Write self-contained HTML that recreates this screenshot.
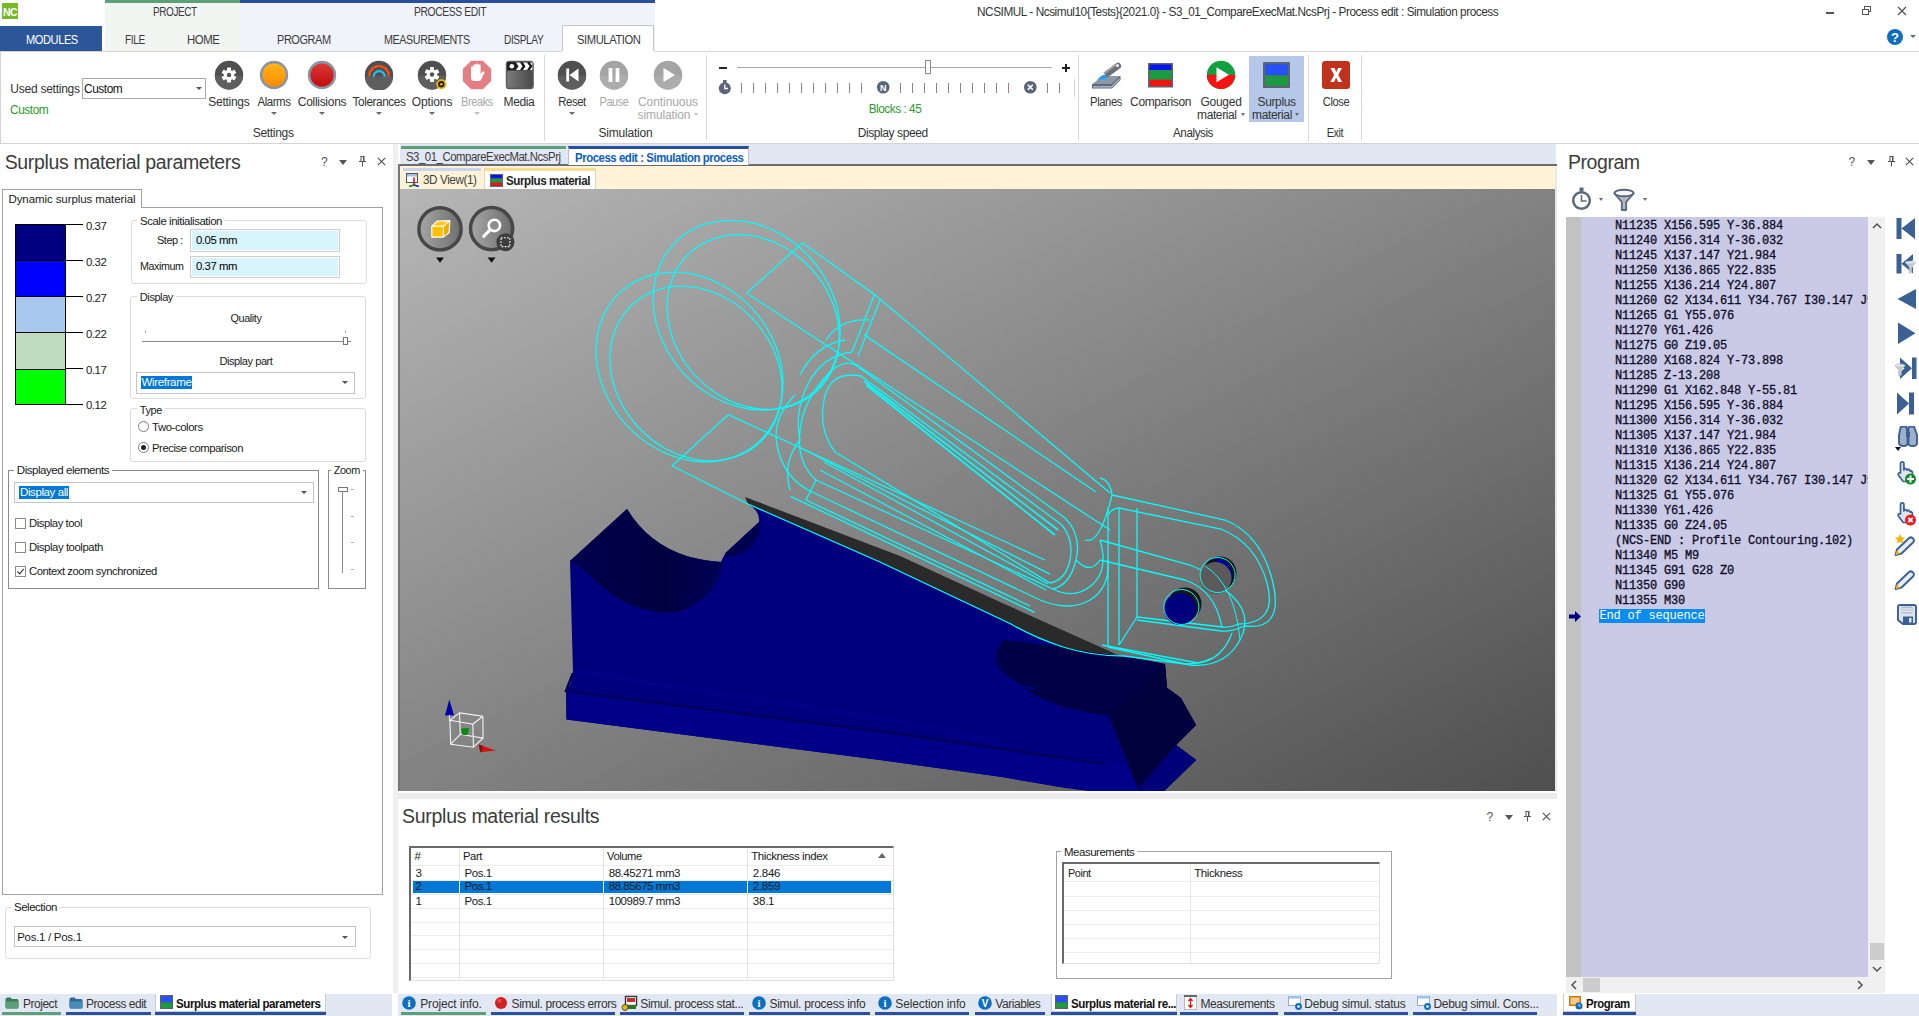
<!DOCTYPE html>
<html lang="en"><head>
<meta charset="utf-8">
<title>NCSIMUL</title>
<style>
*{box-sizing:border-box;margin:0;padding:0}
html,body{width:1919px;height:1016px;overflow:hidden;background:#fff;font-family:"Liberation Sans",sans-serif;color:#262626}
.a{position:absolute}
.t{position:absolute;white-space:nowrap;line-height:1}
/* ---- title / tabs ---- */
#ctxP{left:105px;top:0;width:135px;height:51px;background:#f1f6f3}
#ctxE{left:240px;top:0;width:415px;height:51px;background:#f0f3fa}
.ctxbar{position:absolute;left:0;top:0;right:0;height:3px}
.tab{font-size:12px;color:#3a3a3a;top:33.500px}
.ctxlbl{font-size:12px;color:#3a3a3a;top:6.400px}
#modules{left:0;top:26px;width:102px;height:25px;background:#2b579a;color:#fff;font-size:12px;text-align:center;line-height:25px}
#simtab{left:562px;top:25px;width:92px;height:27px;background:#fff;border:1px solid #c6c6c6;border-bottom:none}
/* ---- ribbon ---- */
#ribbon{left:0;top:51px;width:1919px;height:93px;border-top:1px solid #d4d4d4;border-bottom:1px solid #d4d4d4;border-left:1px solid #d4d4d4;background:#fff}
.rl{font-size:12px;color:#333;top:95.500px;text-align:center;transform:translateX(-50%)}
.rl.dis{color:#a8a8a8}
.gl{font-size:12px;color:#333;top:126.500px;transform:translateX(-50%)}
.sep{position:absolute;top:55px;width:1px;height:86px;background:#dadada}
.dd{position:absolute;width:0;height:0;border-left:3px solid transparent;border-right:3px solid transparent;border-top:3px solid #6a6a6a;transform:translateX(-50%)}
.dd.dis{border-top-color:#c0c0c0}
/* ---- panels ---- */
.ptitle{font-size:19.5px;color:#3c3c3c}
.small{font-size:11.5px;color:#1a1a1a}
.grp{position:absolute;border:1px solid #dcdcdc;border-radius:3px}
.grp>span{position:absolute;top:-8px;left:6px;background:#fff;padding:0 3px;font-size:11px;color:#222;line-height:14px;white-space:nowrap}
.btab{position:absolute;top:993px;height:23px;font-size:12px;color:#333;white-space:nowrap;line-height:20px}
.btab i{position:absolute;left:0;right:2px;bottom:0;height:3px;background:#2b4f9c}
.btab.g i{background:#5e9e78}
</style>
</head>
<body>
<!-- ================= TITLE BAR ================= -->
<div class="a" id="ctxP"><div class="ctxbar" style="background:#5e9e78"></div></div>
<div class="a" id="ctxE"><div class="ctxbar" style="background:#2b4f9c"></div></div>
<svg class="a" style="left:2px;top:3px" width="16" height="16"><rect width="16" height="16" fill="#78b82a"></rect><text x="8" y="12.5" font-family="Liberation Sans,sans-serif" font-size="10.5" font-weight="bold" fill="#fff" text-anchor="middle" letter-spacing="-0.5">NC</text></svg>
<div class="t ctxlbl" style="left: 153px; letter-spacing: -0.45px; transform: scaleX(0.829); transform-origin: 0px 50%;">PROJECT</div>
<div class="t ctxlbl" style="left: 414px; letter-spacing: -0.45px; transform: scaleX(0.861); transform-origin: 0px 50%;">PROCESS EDIT</div>
<!-- window controls -->
<div class="a" style="left:1826px;top:12px;width:8px;height:2px;background:#555"></div>
<svg class="a" style="left:1861px;top:5px" width="11" height="11"><rect x="3.5" y="1.5" width="6" height="5" fill="none" stroke="#555"></rect><rect x="1.5" y="4.5" width="6" height="5" fill="#fff" stroke="#555"></rect></svg>
<svg class="a" style="left:1897px;top:6px" width="10" height="10"><path d="M1 1L9 9M9 1L1 9" stroke="#555" stroke-width="1.3"></path></svg>
<svg class="a" style="left:1886px;top:28px" width="18" height="18"><circle cx="9" cy="9" r="8" fill="#0e6fc0"></circle><text x="9" y="13.5" font-family="Liberation Sans,sans-serif" font-size="13" font-weight="bold" fill="#fff" text-anchor="middle">?</text></svg>
<div class="dd" style="left:1913px;top:35px"></div>
<!-- ================= TAB ROW ================= -->
<div class="a" id="modules"></div><div class="t tab" style="left: 26px; color: rgb(255, 255, 255); letter-spacing: -0.45px; transform: scaleX(0.922); transform-origin: 0px 50%;">MODULES</div>
<div class="a" id="simtab"></div>
<div class="t tab" style="left: 125px; letter-spacing: -0.45px; transform: scaleX(0.837); transform-origin: 0px 50%;">FILE</div>
<div class="t tab" style="left: 186.5px; letter-spacing: -0.45px; transform: scaleX(0.95); transform-origin: 0px 50%;">HOME</div>
<div class="t tab" style="left: 277.4px; letter-spacing: -0.45px; transform: scaleX(0.911); transform-origin: 0px 50%;">PROGRAM</div>
<div class="t tab" style="left: 384.3px; letter-spacing: -0.45px; transform: scaleX(0.894); transform-origin: 0px 50%;">MEASUREMENTS</div>
<div class="t tab" style="left: 504.4px; letter-spacing: -0.45px; transform: scaleX(0.844); transform-origin: 0px 50%;">DISPLAY</div>
<div class="t tab" style="left: 576.6px; letter-spacing: -0.45px; transform: scaleX(0.934); transform-origin: 0px 50%;">SIMULATION</div>
<!-- ================= RIBBON ================= -->
<div class="a" id="ribbon"></div>
<div class="a" style="left:562px;top:51px;width:92px;height:1px;background:#fff"></div>
<div class="a" style="left:563px;top:51px;width:90px;height:1px;background:#fff"></div>
<div class="t" style="left: 977.4px; top: 6px; font-size: 12px; color: rgb(51, 51, 51); letter-spacing: -0.45px; transform: scaleX(0.982); transform-origin: 0px 50%;">NCSIMUL - Ncsimul10{Tests}{2021.0} - S3_01_CompareExecMat.NcsPrj - Process edit : Simulation process</div>
<div class="t" style="left: 10.3px; top: 83px; font-size: 12px; color: rgb(51, 51, 51); letter-spacing: -0.25px;">Used settings</div>
<div class="a" style="left:82px;top:78px;width:124px;height:21px;border:1px solid #ababab;background:#fff"></div>
<div class="t" style="left: 84.2px; top: 83px; font-size: 12px; color: rgb(17, 17, 17); letter-spacing: -0.45px; transform: scaleX(0.991); transform-origin: 0px 50%;">Custom</div>
<div class="dd" style="left:198.5px;top:87px;border-top-color:#555"></div>
<div class="t" style="left: 10.3px; top: 104px; font-size: 12px; color: rgb(44, 154, 44); letter-spacing: -0.45px; transform: scaleX(0.991); transform-origin: 0px 50%;">Custom</div>
<!-- Settings icons -->
<svg class="a" style="left:214px;top:60px" width="30" height="30" viewBox="0 0 30 30"><circle cx="15" cy="15" r="14.2" fill="#4f4f4f"></circle><path d="M0.8 15.5a14.2 14.2 0 0 0 28.4 0z" fill="#5e5e5e"></path><g fill="#fff"><circle cx="15" cy="15" r="5.2"></circle><g id="gt"><rect x="13" y="7.6" width="4" height="14.8" rx=".6"></rect></g><use href="#gt" transform="rotate(60 15 15)"></use><use href="#gt" transform="rotate(120 15 15)"></use></g><circle cx="15" cy="15" r="2.2" fill="#555"></circle></svg>
<svg class="a" style="left:259px;top:60px" width="30" height="30" viewBox="0 0 30 30"><defs><linearGradient id="og" x1="0" y1="0" x2="0" y2="1"><stop offset="0" stop-color="#ffb515"></stop><stop offset="1" stop-color="#ff8a00"></stop></linearGradient></defs><circle cx="15" cy="15" r="14.2" fill="#8a94a4"></circle><circle cx="15" cy="15" r="11.6" fill="url(#og)"></circle></svg>
<svg class="a" style="left:307px;top:60px" width="30" height="30" viewBox="0 0 30 30"><defs><linearGradient id="rg" x1="0" y1="0" x2="0" y2="1"><stop offset="0" stop-color="#dc3838"></stop><stop offset="1" stop-color="#c00c0c"></stop></linearGradient></defs><circle cx="15" cy="15" r="14.2" fill="#8a94a4"></circle><circle cx="15" cy="15" r="11.6" fill="url(#rg)"></circle></svg>
<svg class="a" style="left:364px;top:60px" width="30" height="30" viewBox="0 0 30 30"><circle cx="15" cy="15" r="14.2" fill="#4f4f4f"></circle><path d="M0.8 16.5a14.2 14.2 0 0 0 28.4 0z" fill="#5e5e5e"></path><path d="M5.5 16.5v-4l3.5-4.5l4-1.8h4l4 1.8l3.500 4.5v4" fill="none" stroke="#ff4a12" stroke-width="2.3"></path><path d="M9.6 16.8a5.6 5.6 0 0 1 11.2 0" fill="none" stroke="#1cc8f0" stroke-width="2.2"></path></svg>
<svg class="a" style="left:417px;top:60px" width="32" height="32" viewBox="0 0 32 32"><circle cx="15" cy="15" r="14.2" fill="#4f4f4f"></circle><path d="M0.8 15.5a14.2 14.2 0 0 0 28.4 0z" fill="#5e5e5e"></path><g fill="#fff"><circle cx="15" cy="14.5" r="5.2"></circle><g id="gt2"><rect x="13" y="7.1" width="4" height="14.8" rx=".6"></rect></g><use href="#gt2" transform="rotate(60 15 14.5)"></use><use href="#gt2" transform="rotate(120 15 14.5)"></use></g><circle cx="15" cy="14.5" r="2.2" fill="#555"></circle><circle cx="24.3" cy="24.2" r="5" fill="#f2b500"></circle><circle cx="24.3" cy="24.2" r="3.2" fill="#222"></circle><circle cx="24.3" cy="24.2" r="1.3" fill="#f2b500"></circle></svg>
<svg class="a" style="left:462px;top:60px" width="30" height="30" viewBox="0 0 30 30"><path d="M9.100 .8h11.800l8.300 8.300v11.800l-8.300 8.300h-11.800l-8.300-8.300v-11.800z" fill="#e37f83"></path><path d="M9 14v-6.500a1.200 1.200 0 0 1 2.400 0v-2a1.200 1.200 0 0 1 2.400 0v-.8a1.200 1.200 0 0 1 2.400 0v.8a1.200 1.200 0 0 1 2.400 0v8.500l1.800-2.200a1.200 1.200 0 0 1 2 1.200l-3.300 6.500q-.8 1.500-2.500 1.500h-4.500q-3.100 0-3.100-3.500z" fill="#fff"></path></svg>
<svg class="a" style="left:505px;top:60px" width="30" height="30" viewBox="0 0 30 30"><defs><linearGradient id="mg" x1="0" y1="0" x2="1" y2="0"><stop offset="0" stop-color="#7a7a7a"></stop><stop offset="1" stop-color="#4a4a4a"></stop></linearGradient></defs><rect x=".8" y=".8" width="28" height="28.400" rx="3.500" fill="#5a5a5a"></rect><rect x="2.200" y="11" width="25.200" height="16.600" rx="1.500" fill="url(#mg)"></rect><rect x="2.200" y="2.200" width="25.200" height="8" fill="#1e1e1e"></rect><circle cx="6.800" cy="6.200" r="2.300" fill="#fff"></circle><path d="M11 2.500h4l2.500 3.700l-2.500 3.700h-4l2.500-3.700zM18 2.500h4l2.500 3.700l-2.500 3.700h-4l2.500-3.700zM25 2.500h2.400v7.400h-2.400l2.400-3.700z" fill="#fff"></path></svg>
<div class="t rl c" style="left: 228.9px; letter-spacing: -0.29px;">Settings</div>
<div class="t rl c" style="left: 273.8px; letter-spacing: -0.45px; transform: translateX(-50%) scaleX(0.953);">Alarms</div>
<div class="t rl c" style="left: 322px; letter-spacing: -0.29px;">Collisions</div>
<div class="t rl c" style="left: 378.9px; letter-spacing: -0.45px; transform: translateX(-50%) scaleX(0.986);">Tolerances</div>
<div class="t rl c" style="left: 432px; letter-spacing: -0.09px;">Options</div>
<div class="t rl c dis" style="left: 476.8px; letter-spacing: -0.45px; transform: translateX(-50%) scaleX(0.918);">Breaks</div>
<div class="t rl c" style="left: 519px; letter-spacing: -0.36px;">Media</div>
<div class="dd" style="left:273.8px;top:112px"></div><div class="dd" style="left:322px;top:112px"></div><div class="dd" style="left:378.9px;top:112px"></div><div class="dd" style="left:432px;top:112px"></div><div class="dd dis" style="left:476.8px;top:112px"></div>
<div class="t gl c" style="left: 273.2px; letter-spacing: -0.29px;">Settings</div>
<div class="sep" style="left:544px"></div>
<!-- Simulation group -->
<svg class="a" style="left:557px;top:60px" width="30" height="30" viewBox="0 0 30 30"><circle cx="15" cy="15" r="14.2" fill="#4f4f4f"></circle><path d="M0.8 15.500a14.200 14.200 0 0 0 28.400 0z" fill="#5e5e5e"></path><path d="M9.300 8.500h2.800v13h-2.800zM21.500 8.500v13l-9-6.500z" fill="#fff"></path></svg>
<svg class="a" style="left:599px;top:60px" width="30" height="30" viewBox="0 0 30 30"><circle cx="15" cy="15" r="14.2" fill="#a4a4a4"></circle><path d="M0.8 15.500a14.200 14.200 0 0 0 28.400 0z" fill="#acacac"></path><path d="M9.600 8h3.800v14h-3.800zM16.600 8h3.800v14h-3.800z" fill="#fff"></path></svg>
<svg class="a" style="left:653px;top:60px" width="30" height="30" viewBox="0 0 30 30"><circle cx="15" cy="15" r="14.2" fill="#a4a4a4"></circle><path d="M0.8 15.500a14.200 14.200 0 0 0 28.400 0z" fill="#acacac"></path><path d="M10.500 8l11.500 7l-11.500 7z" fill="#fff"></path></svg>
<div class="t rl c" style="left: 572px; letter-spacing: -0.45px; transform: translateX(-50%) scaleX(0.945);">Reset</div>
<div class="t rl c dis" style="left: 614px; letter-spacing: -0.45px; transform: translateX(-50%) scaleX(0.909);">Pause</div>
<div class="t rl c dis" style="left: 668px; letter-spacing: -0.07px;">Continuous</div>
<div class="t rl c dis" style="left: 664px; top: 108.5px; letter-spacing: -0.12px;">simulation</div>
<div class="dd" style="left:572px;top:112px"></div><div class="dd dis" style="left:695.5px;top:113px;border-width:3px 2.5px 0"></div>
<div class="t gl c" style="left: 625.5px; letter-spacing: -0.2px;">Simulation</div>
<div class="sep" style="left:706px"></div>
<!-- Display speed -->
<div class="a" style="left:719px;top:67px;width:8px;height:2px;background:#222"></div>
<div class="a" style="left:737px;top:67px;width:315px;height:1px;background:#a8a8a8"></div>
<div class="a" style="left:925px;top:60px;width:6px;height:14px;border:1px solid #8a8a8a;background:#fff"></div>
<div class="a" style="left:1062px;top:67px;width:8px;height:2px;background:#222"></div><div class="a" style="left:1065px;top:64px;width:2px;height:8px;background:#222"></div>
<svg class="a" style="left:716px;top:78px" width="365" height="20" viewBox="716 78 365 20"><g stroke="#a27c84" stroke-width="1"><path d="M741.5 83v10M753.500 83v10M765.500 83v10M777.500 83v10M789.500 83v10M801.500 83v10M813.500 83v10M825.500 83v10M837.500 83v10M849.500 83v10M861.500 83v10M900.500 83v10M912.500 83v10M924.500 83v10M936.500 83v10M948.500 83v10M960.500 83v10M972.500 83v10M984.500 83v10M996.500 83v10M1008.500 83v10M1047.500 83v10M1059.500 83v10"></path></g><path d="M1074.500 79v18" stroke="#d4d4d4"></path><g><circle cx="724.8" cy="88.300" r="6" fill="#5a6678"></circle><rect x="723" y="80" width="3.600" height="3" fill="#5a6678"></rect><path d="M724.800 84.500v4h3.200" stroke="#fff" stroke-width="1.300" fill="none"></path></g><circle cx="883.2" cy="87.300" r="6.300" fill="#5a6678"></circle><text x="883.2" y="90.800" font-family="Liberation Sans,sans-serif" font-size="9" font-weight="bold" fill="#fff" text-anchor="middle">N</text><circle cx="1030.3" cy="87.300" r="6.300" fill="#5a6678"></circle><path d="M1027.800 84.800l5 5m0-5l-5 5" stroke="#fff" stroke-width="1.600"></path></svg>
<div class="t c" style="left: 894.5px; top: 103px; font-size: 12px; color: rgb(44, 154, 44); transform: translateX(-50%) scaleX(0.979); letter-spacing: -0.45px;">Blocks : 45</div>
<div class="t gl c" style="left: 892.7px; letter-spacing: -0.41px;">Display speed</div>
<div class="sep" style="left:1078px"></div>
<!-- Analysis -->
<div class="a" style="left:1249px;top:56px;width:55px;height:66px;background:#b5c8ea"></div>
<svg class="a" style="left:1090px;top:59px" width="32" height="32" viewBox="0 0 32 32"><path d="M2 25.500l11-8.500h17.500v4l-8.500 8.500h-20z" fill="#5f6b7c"></path><path d="M2.500 25l11-8h16.500l-8.500 8z" fill="#8c98aa"></path><path d="M3 27.800h18.500l8-8" fill="none" stroke="#b9c2cf" stroke-width="1.200"></path><path d="M7 20.500l5.500-4.500h6l-3.500 4.500z" fill="#2a9df0"></path><path d="M13.500 14l12.500-9.500a3 3 0 0 1 4 4.800l-12.500 9.200z" fill="#6a6f78"></path><path d="M14 14.500l12-9" stroke="#9a9fa8" stroke-width="2"></path><circle cx="27.500" cy="6.500" r="1.500" fill="#fff"></circle></svg>
<svg class="a" style="left:1148px;top:63px" width="25" height="25" viewBox="0 0 25 25"><rect width="25" height="24.500" fill="#5b6573"></rect><rect x="1.500" y="1.500" width="22" height="5.500" fill="#0a14f0"></rect><rect x="1.500" y="7" width="22" height="9.800" fill="#1d9a3e"></rect><rect x="1.500" y="16.800" width="22" height="6.200" fill="#f01414"></rect></svg>
<svg class="a" style="left:1206px;top:60px" width="30" height="30" viewBox="0 0 30 30"><circle cx="15" cy="15" r="14.200" fill="#10a040"></circle><path d="M.8 14.800h28.400a14.200 14.200 0 0 1-28.400 0z" fill="#f41414"></path><path d="M10.500 7.300l12.300 7.500l-12.300 7.500z" fill="#fff"></path></svg>
<svg class="a" style="left:1262.500px;top:61.500px" width="27" height="26" viewBox="0 0 27 26"><rect width="27" height="26" rx="1" fill="#5a6472"></rect><rect x="2.300" y="2.300" width="22.400" height="11.200" fill="#2450f4"></rect><rect x="2.300" y="13.500" width="22.400" height="10.200" fill="#1d9a3e"></rect></svg>
<svg class="a" style="left:1322px;top:61px" width="28" height="28" viewBox="0 0 28 28"><rect width="28" height="28" rx="3" fill="#c0321c"></rect><path d="M8.500 7h4l1.800 4.300l1.800-4.300h3.800l-3.600 7l3.800 7h-4l-2-4.500l-2 4.500h-3.800l3.800-7z" fill="#fff"></path></svg>
<div class="t rl c" style="left: 1105.8px; letter-spacing: -0.45px; transform: translateX(-50%) scaleX(0.935);">Planes</div>
<div class="t rl c" style="left: 1160.6px; letter-spacing: -0.37px;">Comparison</div>
<div class="t rl c" style="left: 1221px; letter-spacing: -0.25px;">Gouged</div>
<div class="t rl c" style="left: 1216.8px; top: 108.5px; letter-spacing: -0.41px;">material</div>
<div class="t rl c" style="left: 1276.6px; letter-spacing: -0.38px;">Surplus</div>
<div class="t rl c" style="left: 1272px; top: 108.5px; letter-spacing: -0.34px;">material</div>
<div class="t rl c" style="left: 1336px; letter-spacing: -0.45px; transform: translateX(-50%) scaleX(0.925);">Close</div>
<div class="dd" style="left:1242.7px;top:113px;border-width:3px 2.500px 0"></div><div class="dd" style="left:1297.4px;top:113px;border-width:3px 2.500px 0"></div>
<div class="t gl c" style="left: 1193.4px; letter-spacing: -0.45px; transform: translateX(-50%) scaleX(0.974);">Analysis</div>
<div class="t gl c" style="left: 1335px; letter-spacing: -0.45px; transform: translateX(-50%) scaleX(0.9);">Exit</div>
<div class="sep" style="left:1308px"></div>
<div class="sep" style="left:1361px"></div>
<!--RIBBON-END-->
<!-- ================= LEFT PANEL ================= -->
<!--LEFT-PANEL-->
<div class="t ptitle" style="left: 4.7px; top: 152.5px; letter-spacing: -0.34px;">Surplus material parameters</div>
<div class="t" style="left:321px;top:156px;font-size:12px;color:#555">?</div>
<div class="dd" style="left:343.3px;top:160px;border-width:5px 4.5px 0;border-top-color:#555"></div>
<svg class="a" style="left:358px;top:156px" width="9" height="11"><path d="M2.500 .5h4M3 .5v5M6 .5v5M1 5.500h7M4.500 5.500v5" stroke="#555" fill="none"></path><path d="M5.500 1v4" stroke="#555"></path></svg>
<svg class="a" style="left:377px;top:157px" width="9" height="9"><path d="M.8 .8l7.400 7.400m0-7.400l-7.400 7.400" stroke="#555" stroke-width="1.200"></path></svg>
<!-- tab page -->
<div class="a" style="left:2px;top:207px;width:381px;height:688px;border:1px solid #a0a0a0;background:#fff"></div>
<div class="a" style="left:2px;top:189px;width:140px;height:19px;border:1px solid #a0a0a0;border-bottom:none;background:#fff"></div>
<div class="t small" style="left: 8.5px; top: 194px; letter-spacing: -0.09px;">Dynamic surplus material</div>
<!-- colour scale -->
<div class="a" style="left:15px;top:224px;width:51px;height:181px;border:1px solid #000;background:linear-gradient(#000080 0 35px,#000 35px 36px,#0000ff 36px 71px,#000 71px 72px,#a8c8f0 72px 107px,#000 107px 108px,#c0dcc0 108px 144px,#000 144px 145px,#00ff00 145px)"></div>
<div class="a" style="left:66px;top:224px;width:17px;height:1px;background:#000"></div>
<div class="a" style="left:66px;top:260px;width:17px;height:1px;background:#000"></div>
<div class="a" style="left:66px;top:296px;width:17px;height:1px;background:#000"></div>
<div class="a" style="left:66px;top:332px;width:17px;height:1px;background:#000"></div>
<div class="a" style="left:66px;top:368px;width:17px;height:1px;background:#000"></div>
<div class="a" style="left:66px;top:404px;width:17px;height:1px;background:#000"></div>
<div class="t small" style="left: 85.5px; top: 220.5px; letter-spacing: -0.45px; transform: scaleX(0.986); transform-origin: 0px 50%;">0.37</div>
<div class="t small" style="left: 85.5px; top: 256.5px; letter-spacing: -0.45px; transform: scaleX(0.986); transform-origin: 0px 50%;">0.32</div>
<div class="t small" style="left: 85.5px; top: 292.5px; letter-spacing: -0.45px; transform: scaleX(0.986); transform-origin: 0px 50%;">0.27</div>
<div class="t small" style="left: 85.5px; top: 329px; letter-spacing: -0.45px; transform: scaleX(0.986); transform-origin: 0px 50%;">0.22</div>
<div class="t small" style="left: 85.5px; top: 364.5px; letter-spacing: -0.45px; transform: scaleX(0.986); transform-origin: 0px 50%;">0.17</div>
<div class="t small" style="left: 85.5px; top: 400px; letter-spacing: -0.45px; transform: scaleX(0.986); transform-origin: 0px 50%;">0.12</div>
<!-- Scale initialisation -->
<div class="grp" style="left:131px;top:220px;width:236px;height:64px"></div>
<div class="t small" style="left: 137px; top: 215px; background: rgb(255, 255, 255); padding: 1px 3px; letter-spacing: -0.45px; transform: scaleX(0.995); transform-origin: 0px 50%;">Scale initialisation</div>
<div class="t small" style="left: 156.9px; top: 235px; letter-spacing: -0.45px; transform: scaleX(0.95); transform-origin: 0px 50%;">Step :</div>
<div class="a" style="left:190px;top:229px;width:150px;height:22.500px;border:1px solid #cdcdcd;background:#d8f4fc;box-shadow:inset 0 0 0 1px #fff"></div>
<div class="t small" style="left: 195.5px; top: 234.5px; color: rgb(0, 0, 0); letter-spacing: -0.45px; transform: scaleX(0.986); transform-origin: 0px 50%;">0.05 mm</div>
<div class="t small" style="left: 140.4px; top: 261px; letter-spacing: -0.45px; transform: scaleX(0.932); transform-origin: 0px 50%;">Maximum</div>
<div class="a" style="left:190px;top:255.500px;width:150px;height:22.500px;border:1px solid #cdcdcd;background:#d8f4fc;box-shadow:inset 0 0 0 1px #fff"></div>
<div class="t small" style="left: 195.5px; top: 260.5px; color: rgb(0, 0, 0); letter-spacing: -0.45px; transform: scaleX(0.986); transform-origin: 0px 50%;">0.37 mm</div>
<!-- Display -->
<div class="grp" style="left:130px;top:296px;width:236px;height:103px"></div>
<div class="t small" style="left: 137px; top: 291px; background: rgb(255, 255, 255); padding: 1px 3px; letter-spacing: -0.45px; transform: scaleX(0.955); transform-origin: 0px 50%;">Display</div>
<div class="t small c" style="left: 246px; top: 312.5px; transform: translateX(-50%) scaleX(0.943); letter-spacing: -0.45px;">Quality</div>
<div class="a" style="left:142px;top:341px;width:209px;height:1px;background:#8c8c8c"></div>
<div class="a" style="left:145px;top:330px;width:1px;height:3px;background:#b0b0b0"></div>
<div class="a" style="left:345px;top:330px;width:1px;height:3px;background:#b0b0b0"></div>
<div class="a" style="left:343px;top:337px;width:5px;height:8px;border:1px solid #777;background:#fff"></div>
<div class="t small c" style="left: 246px; top: 356px; transform: translateX(-50%) scaleX(0.958); letter-spacing: -0.45px;">Display part</div>
<div class="a" style="left:136px;top:372px;width:219px;height:22px;border:1px solid #c4c4c4;background:#fff"></div>
<div class="t small" style="left: 140.5px; top: 376px; color: rgb(255, 255, 255); background: rgb(0, 120, 215); padding: 1px; height: 13px; letter-spacing: -0.34px;">Wireframe</div>
<div class="dd" style="left:344.500px;top:381px;border-top-color:#555"></div>
<!-- Type -->
<div class="grp" style="left:130px;top:408px;width:236px;height:54px"></div>
<div class="t small" style="left: 137px; top: 403.5px; background: rgb(255, 255, 255); padding: 1px 3px; letter-spacing: -0.45px; transform: scaleX(0.951); transform-origin: 0px 50%;">Type</div>
<div class="a" style="left:138px;top:421px;width:11px;height:11px;border:1px solid #7a7a7a;border-radius:50%;background:#fff"></div>
<div class="t small" style="left: 152.2px; top: 421.5px; letter-spacing: -0.45px; transform: scaleX(0.992); transform-origin: 0px 50%;">Two-colors</div>
<div class="a" style="left:138px;top:442px;width:11px;height:11px;border:1px solid #7a7a7a;border-radius:50%;background:#fff"></div>
<div class="a" style="left:141px;top:445px;width:5px;height:5px;border-radius:50%;background:#222"></div>
<div class="t small" style="left: 152.2px; top: 442.5px; letter-spacing: -0.45px; transform: scaleX(0.98); transform-origin: 0px 50%;">Precise comparison</div>
<!-- Displayed elements -->
<div class="a" style="left:8px;top:470px;width:311px;height:119px;border:1px solid #8c8c8c"></div>
<div class="t small" style="left: 13.8px; top: 463.5px; background: rgb(255, 255, 255); padding: 1px 3px; letter-spacing: -0.45px;">Displayed elements</div>
<div class="a" style="left:14px;top:482px;width:300px;height:21px;border:1px solid #c4c4c4;background:#fff"></div>
<div class="t small" style="left: 19px; top: 486px; color: rgb(255, 255, 255); background: rgb(0, 120, 215); padding: 1px; height: 13px; letter-spacing: -0.4px;">Display all</div>
<div class="dd" style="left:304.400px;top:491px;border-top-color:#555"></div>
<div class="a" style="left:15px;top:518px;width:11px;height:11px;border:1px solid #8a8a8a;background:#fff"></div>
<div class="t small" style="left: 29.4px; top: 518px; letter-spacing: -0.45px; transform: scaleX(0.981); transform-origin: 0px 50%;">Display tool</div>
<div class="a" style="left:15px;top:542px;width:11px;height:11px;border:1px solid #8a8a8a;background:#fff"></div>
<div class="t small" style="left: 29.4px; top: 542px; letter-spacing: -0.45px; transform: scaleX(0.989); transform-origin: 0px 50%;">Display toolpath</div>
<div class="a" style="left:15px;top:566px;width:11px;height:11px;border:1px solid #8a8a8a;background:#fff"></div>
<svg class="a" style="left:16px;top:567px" width="9" height="9"><path d="M1.500 4.500l2.200 2.300l4-5" stroke="#333" stroke-width="1.100" fill="none"></path></svg>
<div class="t small" style="left: 29.4px; top: 566px; letter-spacing: -0.45px; transform: scaleX(0.978); transform-origin: 0px 50%;">Context zoom synchronized</div>
<!-- Zoom -->
<div class="a" style="left:328px;top:470px;width:38px;height:119px;border:1px solid #8c8c8c"></div>
<div class="t small" style="left: 331px; top: 463.5px; background: rgb(255, 255, 255); padding: 1px 3px; letter-spacing: -0.45px; transform: scaleX(0.942); transform-origin: 0px 50%;">Zoom</div>
<div class="a" style="left:342px;top:491px;width:1px;height:82px;background:#8c8c8c"></div>
<div class="a" style="left:338px;top:487px;width:10px;height:5px;border:1px solid #777;background:#fff"></div>
<div class="a" style="left:351px;top:489px;width:3px;height:1px;background:#b0b0b0"></div>
<div class="a" style="left:351px;top:516px;width:3px;height:1px;background:#b0b0b0"></div>
<div class="a" style="left:351px;top:542px;width:3px;height:1px;background:#b0b0b0"></div>
<div class="a" style="left:351px;top:569px;width:3px;height:1px;background:#b0b0b0"></div>
<!-- Selection -->
<div class="grp" style="left:5px;top:907px;width:366px;height:52px"></div>
<div class="t small" style="left: 11.3px; top: 901px; background: rgb(255, 255, 255); padding: 1px 3px; letter-spacing: -0.45px; transform: scaleX(0.994); transform-origin: 0px 50%;">Selection</div>
<div class="a" style="left:14px;top:926px;width:342px;height:21px;border:1px solid #c4c4c4;background:#fff"></div>
<div class="t small" style="left: 17.2px; top: 931.5px; letter-spacing: -0.29px;">Pos.1 / Pos.1</div>
<div class="dd" style="left:345.100px;top:936px;border-top-color:#555"></div>
<!-- splitter + doc frame -->
<div class="a" style="left:393px;top:144px;width:5px;height:849px;background:#f0f0f0"></div>
<!--LEFT-END-->
<!-- ================= CENTER ================= -->
<!--CENTER-->
<div class="a" style="left:400px;top:144px;width:1156px;height:20px;background:#e2e7f4"></div>
<div class="a" style="left:398px;top:164px;width:1159px;height:2px;background:#6c6c6c"></div>
<div class="a" style="left:398px;top:164px;width:2px;height:627px;background:#767676"></div>
<div class="a" style="left:1555px;top:166px;width:2px;height:625px;background:#e8e8e8"></div>
<div class="a" style="left:400px;top:166px;width:1155px;height:23px;background:#fef3d8"></div>
<div class="a" style="left:401px;top:146px;width:165px;height:3px;background:#5e9e78"></div>
<div class="t" style="left: 405.6px; top: 151px; font-size: 12px; color: rgb(58, 58, 58); letter-spacing: -0.45px; transform: scaleX(0.943); transform-origin: 0px 50%;">S3_01_CompareExecMat.NcsPrj</div>
<div class="a" style="left:568px;top:146px;width:181px;height:19px;background:#fff;border:1px solid #b8c0d8;border-bottom:none;border-top:3px solid #2b4f9c"></div>
<div class="t" style="left: 574.7px; top: 152px; font-size: 12px; color: rgb(10, 94, 194); font-weight: bold; letter-spacing: -0.45px; transform: scaleX(0.947); transform-origin: 0px 50%;">Process edit : Simulation process</div>
<div class="a" style="left:403px;top:168px;width:78px;height:3px;background:#c9d5f0"></div>
<svg class="a" style="left:405px;top:172px" width="16" height="15" viewBox="0 0 16 15"><rect x="1.5" y="1.5" width="11" height="9" fill="#fff" stroke="#555"></rect><rect x="2" y="2" width="10" height="2.5" fill="#9ec0ee"></rect><path d="M9 13.500v-8" stroke="#e01010" stroke-width="1.600"></path><path d="M9 13l-5 1.500" stroke="#0a8a20" stroke-width="1.800"></path><path d="M9 13l5 1.500" stroke="#1030d0" stroke-width="1.800"></path></svg>
<div class="t" style="left: 423px; top: 174px; font-size: 12px; color: rgb(68, 68, 68); letter-spacing: -0.45px; transform: scaleX(0.979); transform-origin: 0px 50%;">3D View(1)</div>
<div class="a" style="left:484px;top:168px;width:112px;height:21px;background:#fff;border:1px solid #e2d6b0;border-bottom:none;border-top:3px solid #f8dc94"></div>
<svg class="a" style="left:490px;top:174px" width="13" height="13"><rect width="13" height="13" fill="#5b6573"></rect><rect x="1" y="1" width="11" height="3.500" fill="#0a14f0"></rect><rect x="1" y="4.500" width="11" height="4" fill="#1d9a3e"></rect><rect x="1" y="8.500" width="11" height="3.500" fill="#e01818"></rect></svg>
<div class="t" style="left: 505.6px; top: 175px; font-size: 12px; color: rgb(34, 34, 34); font-weight: bold; letter-spacing: -0.45px; transform: scaleX(0.967); transform-origin: 0px 50%;">Surplus material</div>
<svg class="a" style="left:400px;top:189px" width="1155" height="602" viewBox="400 189 1155 602">
<defs><linearGradient id="bgG" x1="0" y1="0" x2="1" y2="1"><stop offset="0" stop-color="#b6b6b6"></stop><stop offset="1" stop-color="#4f4f4f"></stop></linearGradient>
<linearGradient id="sdl" x1="0" y1="0" x2="1" y2="0"><stop offset="0" stop-color="#00004e"></stop><stop offset=".6" stop-color="#000040"></stop><stop offset="1" stop-color="#000058"></stop></linearGradient>
<linearGradient id="btn" x1="0" y1="0" x2="1" y2="0"><stop offset="0" stop-color="#a6a6a6"></stop><stop offset="1" stop-color="#6e6e6e"></stop></linearGradient></defs>
<rect x="400" y="189" width="1155" height="602" fill="url(#bgG)"></rect>
<path d="M570 561L627 509Q648 544 688 556.500Q706 561 721 562L725.500 553L759 522Q760 511 748 504L880 562L1011 624Q1035 638 1063 647T1124 656L1165 664L1167 688Q1178 694 1183 703T1196 725L1176 745L1196 760L1164 791L1090 791L1063 787.500L1002 777L880 760L566.500 719.500L566 691Q572 684 573 673Z" fill="#00007e"></path>
<polygon points="566.0,691.0 900.0,734.0 1128.0,765.0 1139.0,791.0 1090.0,791.0 1063.0,787.5 1002.0,777.0 880.0,760.0 566.5,719.5" fill="#000088"></polygon>
<path d="M573 673L566 691L900 734L1105 764" fill="none" stroke="#000058" stroke-width="2.5"></path>
<path d="M575 671L900 722L1000 742" fill="none" stroke="#000090" stroke-width="5" opacity=".5"></path>
<path d="M570 561L627 509Q648 544 688 556.500Q706 561 721 562L724 556Q721 584 701 600T657 612Q622 607 596 581Q582 568 570 561Z" fill="url(#sdl)"></path>
<path d="M725.500 553L759 522Q763 538 746 551Q736 557 725.500 557z" fill="#000050"></path>
<polygon points="1003.0,640.0 1063.0,647.0 1100.0,653.0 1124.0,656.0 1165.0,664.0 1167.0,688.0 1181.0,698.0 1196.0,725.0 1176.0,745.0 1196.0,760.0 1164.0,791.0 1139.0,791.0 1109.0,716.0 1085.0,712.0 1063.0,707.0 1040.0,698.0 1023.0,688.0 1006.0,676.0 997.0,665.0 996.0,652.0" fill="#000046"></polygon>
<path d="M1109 716L1165 664L1167 688L1181 698L1196 725L1176 745L1196 760L1164 791L1139 791z" fill="#00003c"></path>
<path d="M1176 745L1196 760L1164 791L1136 791z" fill="#000078"></path>
<path d="M1006 676q14 14 30 12" fill="none" stroke="#00008c" stroke-width="2"></path>
<polygon points="745.0,497.0 900.0,556.0 1000.0,602.0 1118.0,655.0 1090.0,652.0 1063.0,647.0 1035.0,637.0 1011.0,624.0 880.0,562.0 748.0,504.0" fill="#2a2a2a"></polygon>
<g fill="none" stroke="#08fafa" stroke-width="1.3">
<ellipse cx="689.5" cy="367" rx="102" ry="85.7" transform="rotate(47.5 689.5 367)"></ellipse>
<ellipse cx="696" cy="373.5" rx="93.9" ry="78.9" transform="rotate(47.5 696 373.5)"></ellipse>
<ellipse cx="746.6" cy="315.2" rx="102" ry="85.7" transform="rotate(47.5 746.6 315.2)"></ellipse>
<ellipse cx="753.2" cy="322.1" rx="93.9" ry="78.9" transform="rotate(47.5 753.2 322.1)"></ellipse>
<path d="M802.4 242.8L746.6 293.2"></path>
<path d="M728.2 414.7L671.9 465.9"></path>
<path d="M802.4 242.8L874.5 294.6L1110 493"></path>
<path d="M746.6 293.2L1110 530"></path>
<path d="M728.2 414.7L820.3 457L1045 560"></path>
<path d="M671.5 465.5L748 504L880 562L1011 624"></path>
<path d="M1011 624Q1035 638 1063 647T1124 656L1185 664Q1200 664 1212 658"></path>
<path d="M863.8 334.6L1095.7 491.7"></path>
<path d="M799.7 447.5L1049.9 574.1"></path>
<path d="M790.5 496.3L1034.6 612.3"></path>
<path d="M874.5 294.6L852 352"></path>
<path d="M880 300L858 356"></path>
<path d="M857 366L1065 518Q1082 535 1076 560T1053 589L816 480Q796 462 800 430T830 372Q845 358 857 366z"></path>
<path d="M861 376L1062 525Q1074 540 1070 560T1050 583L835 452Q818 430 824 400T861 376z"></path>
<path d="M864 381L1058 530M866 385L1055 535" stroke-width="1.6"></path>
<path d="M820 470L1046 590M824 462L1048 584"></path>
<path d="M795 395Q770 420 778 450T812 492L1040 600"></path>
<path d="M845 340Q815 345 800 375"></path>
<path d="M852 352Q822 356 808 384T800 440"></path>
<path d="M870 320Q840 318 826 340"></path>
<path d="M800 440Q782 462 790 490"></path>
<path d="M816 480L806 500L1030 606"></path>
<path d="M1076 560Q1090 575 1100 560M1053 589Q1075 600 1092 585T1100 540"></path>
<path d="M1040 600Q1070 612 1090 600T1108 560"></path>
<path d="M1112 495L1225 520Q1262 535 1273 583T1244 626Q1232 632 1221 631L1137 620"></path>
<path d="M1119 508L1221 529Q1256 543 1267 583T1239 624Q1230 628 1222 627"></path>
<path d="M1108 508V647M1119 508V645M1137 508V617"></path>
<path d="M1119 508Q1112 508 1108 515"></path>
<path d="M1102 645L1198 663Q1222 660 1232 633"></path>
<path d="M1108 647L1190 665Q1225 668 1240 640T1225 590Q1215 575 1190 565L1100 540"></path>
<path d="M1137 617L1119 645M1137 617L1222 627M1085 540Q1100 545 1112 495M1100 478Q1110 480 1112 495"></path>
<path d="M1100 560L1185 580Q1215 590 1222 627"></path>
</g>
<circle cx="1220" cy="573" r="16.5" fill="#151515"></circle><path d="M1214 559a16 16 0 0 1 16 24z" fill="#0000a0"></path><circle cx="1215.500" cy="578" r="16" fill="#5a5a5a"></circle>
<circle cx="1185" cy="604" r="16.500" fill="#151515"></circle><circle cx="1180" cy="609" r="16" fill="#00007e"></circle>
<g fill="none" stroke="#08fafa" stroke-width="1"><circle cx="1217.600" cy="575" r="17.500"></circle><circle cx="1181.400" cy="607" r="17.500"></circle><path d="M1205 566Q1235 585 1240 640"></path></g>
<g fill="none" stroke="#f4f4f4" stroke-width="1.100"><path d="M449.900 720.300L472.800 724.300L473.500 747.200L450.700 744.200zM459.500 712.900L482.800 716.200L483.100 738L460.300 734.300zM449.900 720.300L459.500 712.900M472.800 724.300L482.800 716.200M473.500 747.200L483.100 738M450.700 744.200L460.300 734.300"></path></g>
<path d="M449.300 699.600L454 715.300L445 715.600z" fill="#0000a8"></path><path d="M449.400 715v6" stroke="#eee" stroke-width="1"></path>
<path d="M461 728.400L469.100 728L467.600 735L462.500 735z" fill="#0a8a10"></path>
<path d="M478.700 744.400L495.700 750.500L480.400 752.200z" fill="#d81010"></path><path d="M478.700 744.400L483 746L481.500 752L480.400 752.200z" fill="#8a0a0a"></path>
<circle cx="440" cy="228.900" r="21.100" fill="url(#btn)" stroke="#474747" stroke-width="3.500"></circle>
<path d="M431.800 226.100L437.300 221L449.900 220.600L443.600 226.100z" fill="#ffc81e"></path><path d="M443.600 226.100L449.900 220.600L449.100 232.800L443.200 237.100z" fill="#f2ae00"></path><path d="M431.800 226.100h11.800l-.4 11h-11.400z" fill="#ffc000"></path><path d="M431.800 226.100L437.300 221L449.900 220.600L449.100 232.800L443.200 237.100H431.800zM431.800 226.100H443.600L449.900 220.600M443.600 226.100L443.200 237.100" fill="none" stroke="#fff" stroke-width="1.100" stroke-linejoin="round"></path>
<circle cx="491.600" cy="228.600" r="21.100" fill="url(#btn)" stroke="#474747" stroke-width="3.500"></circle><circle cx="494.400" cy="225.400" r="5.700" fill="#8e8e8e" stroke="#fff" stroke-width="2.600"></circle><path d="M490 229.900l-6.300 6.500" stroke="#fff" stroke-width="3" stroke-linecap="round"></path><circle cx="505.400" cy="242.200" r="9" fill="#3e3e3e"></circle><rect x="501" y="237.800" width="8.800" height="8.800" fill="none" stroke="#fff" stroke-width="1.100" stroke-dasharray="1.700 1.300"></rect>
<path d="M436 257.600h8l-4 5.200zM487.600 257.600h8l-4 5.200z" fill="#111"></path>
</svg>
<!--CENTER-END-->
<!-- ================= RESULTS ================= -->
<!--RESULTS-->
<div class="a" style="left:398px;top:793px;width:1159px;height:6px;background:#ececec"></div>
<div class="t ptitle" style="left: 402px; top: 806.5px; letter-spacing: -0.27px;">Surplus material results</div>
<div class="t" style="left:1486.500px;top:811px;font-size:12px;color:#555">?</div>
<div class="dd" style="left:1508.500px;top:815px;border-width:5px 4.500px 0;border-top-color:#555"></div>
<svg class="a" style="left:1523px;top:811px" width="9" height="11"><path d="M2.500 .5h4M3 .5v5M6 .5v5M1 5.500h7M4.500 5.500v5" stroke="#555" fill="none"></path><path d="M5.500 1v4" stroke="#555"></path></svg>
<svg class="a" style="left:1542px;top:812px" width="9" height="9"><path d="M.8 .8l7.400 7.400m0-7.400l-7.400 7.400" stroke="#555" stroke-width="1.200"></path></svg>
<div class="a" style="left:409px;top:846px;width:485px;height:135px;border:1px solid #e0e0e0;border-top:2px solid #6a6a6a;border-left:2px solid #6a6a6a;background:#fff"></div>
<div class="a" style="left:411px;top:864.5px;width:482px;height:1px;background:#ececec"></div>
<div class="a" style="left:411px;top:879.5px;width:482px;height:1px;background:#ececec"></div>
<div class="a" style="left:411px;top:893.5px;width:482px;height:1px;background:#ececec"></div>
<div class="a" style="left:411px;top:907.6px;width:482px;height:1px;background:#ececec"></div>
<div class="a" style="left:411px;top:921.5px;width:482px;height:1px;background:#ececec"></div>
<div class="a" style="left:411px;top:935.3px;width:482px;height:1px;background:#ececec"></div>
<div class="a" style="left:411px;top:949.2px;width:482px;height:1px;background:#ececec"></div>
<div class="a" style="left:411px;top:963.0px;width:482px;height:1px;background:#ececec"></div>
<div class="a" style="left:411px;top:976.6px;width:482px;height:1px;background:#ececec"></div>
<div class="a" style="left:459px;top:848px;width:1px;height:132px;background:#e6e6e6"></div>
<div class="a" style="left:603px;top:848px;width:1px;height:132px;background:#e6e6e6"></div>
<div class="a" style="left:747px;top:848px;width:1px;height:132px;background:#e6e6e6"></div>
<div class="a" style="left:413px;top:880.500px;width:478px;height:12.500px;background:#0078d7"></div>
<div class="a" style="left:459px;top:880.500px;width:1px;height:12.500px;background:#fff"></div>
<div class="a" style="left:603px;top:880.500px;width:1px;height:12.500px;background:#fff"></div>
<div class="a" style="left:747px;top:880.500px;width:1px;height:12.500px;background:#fff"></div>
<div class="t small" style="left:414.500px;top:850.5px">#</div>
<div class="t small" style="left: 462.8px; top: 850.5px; letter-spacing: -0.45px; transform: scaleX(0.985); transform-origin: 0px 50%;">Part</div>
<div class="t small" style="left: 606.9px; top: 850.5px; letter-spacing: -0.45px; transform: scaleX(0.973); transform-origin: 0px 50%;">Volume</div>
<div class="t small" style="left: 751.2px; top: 850.5px; letter-spacing: -0.41px;">Thickness index</div>
<div class="a" style="left:878px;top:853px;width:0;height:0;border-left:4px solid transparent;border-right:4px solid transparent;border-bottom:5px solid #666"></div>
<div class="t small" style="left:415.500px;top:867.5px">3</div>
<div class="t small" style="left: 464.4px; top: 867.5px; letter-spacing: -0.4px;">Pos.1</div>
<div class="t small" style="left: 608.7px; top: 867.5px; letter-spacing: -0.45px;">88.45271 mm3</div>
<div class="t small" style="left: 752.8px; top: 867.5px; letter-spacing: -0.28px;">2.846</div>
<div class="t small" style="left:415.500px;top:881px">2</div>
<div class="t small" style="left: 464.4px; top: 881px; letter-spacing: -0.4px;">Pos.1</div>
<div class="t small" style="left: 608.7px; top: 881px; letter-spacing: -0.45px;">88.85675 mm3</div>
<div class="t small" style="left: 752.8px; top: 881px; letter-spacing: -0.28px;">2.859</div>
<div class="t small" style="left:415.500px;top:895.5px">1</div>
<div class="t small" style="left: 464.4px; top: 895.5px; letter-spacing: -0.4px;">Pos.1</div>
<div class="t small" style="left: 608.7px; top: 895.5px; letter-spacing: -0.45px;">100989.7 mm3</div>
<div class="t small" style="left: 752.8px; top: 895.5px; letter-spacing: -0.22px;">38.1</div>
<div class="a" style="left:1056px;top:851px;width:336px;height:128px;border:1px solid #a2a2a2"></div>
<div class="t small" style="left: 1061px; top: 845.5px; background: rgb(255, 255, 255); padding: 1px 3px; letter-spacing: -0.45px; transform: scaleX(0.995); transform-origin: 0px 50%;">Measurements</div>
<div class="a" style="left:1062px;top:862px;width:318px;height:102px;border:1px solid #e0e0e0;border-top:2px solid #6a6a6a;border-left:2px solid #6a6a6a;background:#fff"></div>
<div class="a" style="left:1064px;top:881.4px;width:315px;height:1px;background:#ececec"></div>
<div class="a" style="left:1064px;top:896.2px;width:315px;height:1px;background:#ececec"></div>
<div class="a" style="left:1064px;top:910.0px;width:315px;height:1px;background:#ececec"></div>
<div class="a" style="left:1064px;top:924.0px;width:315px;height:1px;background:#ececec"></div>
<div class="a" style="left:1064px;top:938.2px;width:315px;height:1px;background:#ececec"></div>
<div class="a" style="left:1064px;top:952.0px;width:315px;height:1px;background:#ececec"></div>
<div class="a" style="left:1190px;top:864px;width:1px;height:99px;background:#e6e6e6"></div>
<div class="t small" style="left: 1068.1px; top: 867.5px; letter-spacing: -0.45px; transform: scaleX(0.947); transform-origin: 0px 50%;">Point</div>
<div class="t small" style="left: 1194.2px; top: 867.5px; letter-spacing: -0.39px;">Thickness</div>
<!--RESULTS-END-->
<!-- ================= RIGHT PANEL ================= -->
<!--RIGHT-PANEL-->
<div class="a" style="left:1557px;top:144px;width:5px;height:849px;background:#fff"></div>
<div class="t ptitle" style="left: 1568px; top: 152.5px; letter-spacing: -0.45px;">Program</div>
<div class="t" style="left:1848.500px;top:156px;font-size:12px;color:#555">?</div>
<div class="dd" style="left:1871.300px;top:160px;border-width:5px 4.500px 0;border-top-color:#555"></div>
<svg class="a" style="left:1886.500px;top:156px" width="9" height="11"><path d="M2.500 .5h4M3 .5v5M6 .5v5M1 5.500h7M4.500 5.500v5" stroke="#555" fill="none"></path><path d="M5.500 1v4" stroke="#555"></path></svg>
<svg class="a" style="left:1905px;top:157px" width="9" height="9"><path d="M.8 .8l7.400 7.400m0-7.400l-7.400 7.400" stroke="#555" stroke-width="1.200"></path></svg>
<svg class="a" style="left:1570px;top:186px" width="24" height="26" viewBox="0 0 24 26"><circle cx="11.500" cy="14.500" r="8.300" fill="#fff" stroke="#5a6878" stroke-width="2.500"></circle><rect x="9.500" y="1.500" width="4" height="4" fill="#5a6878"></rect><path d="M11.500 9v6h5" stroke="#5a6878" stroke-width="1.500" fill="none"></path></svg>
<div class="dd" style="left:1601.400px;top:198px;border-width:3px 2.500px 0"></div>
<svg class="a" style="left:1613px;top:188px" width="22" height="24" viewBox="0 0 22 24"><path d="M1.500 5.500l7.300 8.500v8h4.400v-8l7.300-8.500z" fill="#b2b9c3" stroke="#5a6878" stroke-width="1.800" stroke-linejoin="round"></path><ellipse cx="11" cy="5" rx="9.500" ry="3.300" fill="#f4f6f8" stroke="#5a6878" stroke-width="2"></ellipse></svg>
<div class="dd" style="left:1644.500px;top:198px;border-width:3px 2.500px 0"></div>
<div class="a" style="left:1566px;top:217px;width:302px;height:760px;background:#cacae6;overflow:hidden"><div class="a" style="left:0;top:0;width:15px;height:760px;background:#c2c2c2"></div>
<pre class="a" style="left:49px;top:1.500px;margin:0;font-family:'Liberation Mono',monospace;font-size:12px;line-height:15px;letter-spacing:-.2px;color:#0c0c28;-webkit-text-stroke:.3px #0c0c28">N11235 X156.595 Y-36.884
N11240 X156.314 Y-36.032
N11245 X137.147 Y21.984
N11250 X136.865 Y22.835
N11255 X136.214 Y24.807
N11260 G2 X134.611 Y34.767 I30.147 J97.803
N11265 G1 Y55.076
N11270 Y61.426
N11275 G0 Z19.05
N11280 X168.824 Y-73.898
N11285 Z-13.208
N11290 G1 X162.848 Y-55.81
N11295 X156.595 Y-36.884
N11300 X156.314 Y-36.032
N11305 X137.147 Y21.984
N11310 X136.865 Y22.835
N11315 X136.214 Y24.807
N11320 G2 X134.611 Y34.767 I30.147 J97.803
N11325 G1 Y55.076
N11330 Y61.426
N11335 G0 Z24.05
(NCS-END : Profile Contouring.102)
N11340 M5 M9
N11345 G91 G28 Z0
N11350 G90
N11355 M30</pre>
<div class="a" style="left:33px;top:391.500px;width:106px;height:14px;background:#0a8cf0"></div>
<pre class="a" style="left:33.500px;top:391.500px;margin:0;font-family:'Liberation Mono',monospace;font-size:12px;line-height:15px;letter-spacing:-.2px;color:#fff">End of sequence</pre>
<svg class="a" style="left:3px;top:393.500px" width="12" height="11"><path d="M0 3.500h6v-3.500l6 5.500l-6 5.500v-3.500h-6z" fill="#000080"></path></svg>
</div>
<div class="a" style="left:1868px;top:217px;width:17px;height:760px;background:#f0f0f0"></div>
<div class="a" style="left:1566px;top:977px;width:319px;height:16px;background:#f0f0f0"></div>
<div class="a" style="left:1870px;top:943px;width:14px;height:17px;background:#cdcdcd"></div>
<div class="a" style="left:1583px;top:978px;width:17px;height:14px;background:#cdcdcd"></div>
<svg class="a" style="left:1872px;top:222px" width="10" height="8"><path d="M1 6l4-4l4 4" fill="none" stroke="#505050" stroke-width="1.500"></path></svg>
<svg class="a" style="left:1872px;top:965px" width="10" height="8"><path d="M1 2l4 4l4-4" fill="none" stroke="#505050" stroke-width="1.500"></path></svg>
<svg class="a" style="left:1570px;top:980px" width="8" height="10"><path d="M6 1l-4 4l4 4" fill="none" stroke="#505050" stroke-width="1.500"></path></svg>
<svg class="a" style="left:1856px;top:980px" width="8" height="10"><path d="M2 1l4 4l-4 4" fill="none" stroke="#505050" stroke-width="1.500"></path></svg>
<svg class="a" style="left:1896px;top:218px" width="20" height="21" viewBox="0 0 20 21"><path d="M.5 0h5v21h-5zM19 0v21l-13.500-10.500z" fill="#3b6093"></path></svg>
<svg class="a" style="left:1896px;top:254px" width="22" height="21" viewBox="0 0 22 21"><path d="M.5 0h5v19.500h-5zM17 0l-11.500 9.750l11.500 9.750v-6l-4.300-3.750l4.300-3.750z" fill="#3b6093"></path><g transform="translate(9.5 7)"><path d="M0 1.500h10l-3.800 4.500v5l-2.400 1.200v-6.200z" fill="#c9ced6" stroke="#aeb4be" stroke-width=".7"></path><ellipse cx="5" cy="1.500" rx="5" ry="1.500" fill="#e4e7ec" stroke="#aeb4be" stroke-width=".6"></ellipse></g></svg>
<svg class="a" style="left:1897px;top:289px" width="20" height="21" viewBox="0 0 20 21"><path d="M19 0v20l-18.500-10z" fill="#3b6093"></path></svg>
<svg class="a" style="left:1897px;top:322px" width="20" height="23" viewBox="0 0 20 23"><path d="M1 .5v21.500l17.500-10.750z" fill="#3b6093"></path></svg>
<svg class="a" style="left:1895px;top:357px" width="22" height="23" viewBox="0 0 22 23"><path d="M17 .5h4.500v21.500h-4.500zM5 .5l12 10.750l-12 10.750v-6.500l4.500-4.250l-4.500-4.250z" fill="#3b6093"></path><g transform="translate(0 7)"><path d="M0 1.500h10l-3.800 4.500v5l-2.400 1.200v-6.200z" fill="#c9ced6" stroke="#aeb4be" stroke-width=".7"></path><ellipse cx="5" cy="1.500" rx="5" ry="1.500" fill="#e4e7ec" stroke="#aeb4be" stroke-width=".6"></ellipse></g></svg>
<svg class="a" style="left:1896px;top:392px" width="20" height="23" viewBox="0 0 20 23"><path d="M13 .5h5v22h-5zM1 .5v22l12-11z" fill="#3b6093"></path></svg>
<svg class="a" style="left:1897px;top:426px" width="22" height="21" viewBox="0 0 22 21"><path d="M3.500 2q0-1.500 1.500-1.500h3q1.500 0 1.500 1.500l1 6v9q0 3-4 3t-4.500-3v-8zM11.500 2q0-1.500 1.500-1.500h3q1.500 0 1.500 1.500l2.500 7v8q0 3-4.500 3t-4-3v-9z" fill="#9fb1c9" stroke="#3b6093" stroke-width="1.900"></path><path d="M9 6h4v5h-4z" fill="#3b6093"></path></svg>
<div class="dd" style="left:1897.500px;top:447px;border-width:4px 3.500px 0;border-top-color:#111"></div>
<svg class="a" style="left:1894px;top:460px" width="23" height="26" viewBox="0 0 23 26"><path d="M6.500 13v-9.500a1.700 1.700 0 0 1 3.400 0v6.500l1-1.500l1.500 .3l.7 1.200l1.300-.8l1.300 .8l.5 1.200l1.200-.3l1 1.200v4l-1.200 5.400h-8l-4.700-6.300q-.9-1.700 .7-2.400z" fill="#dfe5ee" stroke="#3b6093" stroke-width="1.700" stroke-linejoin="round"></path><circle cx="16.500" cy="19" r="5.500" fill="#118a2c"></circle><path d="M16.500 15.500v7M13 19h7" stroke="#fff" stroke-width="2"></path></svg>
<svg class="a" style="left:1894px;top:501px" width="23" height="26" viewBox="0 0 23 26"><path d="M6.500 13v-9.500a1.700 1.700 0 0 1 3.400 0v6.500l1-1.500l1.500 .3l.7 1.200l1.300-.8l1.300 .8l.5 1.200l1.200-.3l1 1.200v4l-1.200 5.400h-8l-4.700-6.300q-.9-1.700 .7-2.400z" fill="#dfe5ee" stroke="#3b6093" stroke-width="1.700" stroke-linejoin="round"></path><circle cx="16.500" cy="19" r="5.500" fill="#e81c24"></circle><path d="M14.300 16.800l4.400 4.400m0-4.400l-4.400 4.400" stroke="#fff" stroke-width="1.900"></path></svg>
<svg class="a" style="left:1894px;top:534px" width="23" height="22" viewBox="0 0 23 22"><g transform="translate(0 3)"><path d="M1.500 18l1.500-5.500l11.500-11a2.600 2.600 0 0 1 4.500 4l-11.500 11z" fill="#e8edf4" stroke="#3b6093" stroke-width="1.900" stroke-linejoin="round"></path><path d="M1.500 18l1.200-4.500l3.600 3.200z" fill="#f0b400"></path></g><path d="M6 0l1.600 3.300l3.600 .4l-2.700 2.400l.8 3.500l-3.300-1.900l-3.300 1.900l.8-3.500l-2.700-2.400l3.600-.4z" fill="#f5b70a"></path></svg>
<svg class="a" style="left:1894px;top:570px" width="23" height="20" viewBox="0 0 23 20"><g transform="translate(0 1)"><path d="M1.500 18l1.500-5.500l11.500-11a2.600 2.600 0 0 1 4.500 4l-11.500 11z" fill="#e8edf4" stroke="#3b6093" stroke-width="1.900" stroke-linejoin="round"></path><path d="M1.500 18l1.200-4.500l3.600 3.200z" fill="#f0b400"></path></g></svg>
<svg class="a" style="left:1897px;top:604px" width="20" height="21" viewBox="0 0 20 21"><path d="M1 3q0-2 2-2h14q2 0 2 2v15q0 2-2 2h-11l-5-4z" fill="#dfe5ee" stroke="#3b6093" stroke-width="1.900"></path><rect x="4.500" y="2.500" width="11" height="7" fill="#b4bfce"></rect><path d="M5 5h10M5 7.300h10" stroke="#fff" stroke-width=".9"></path><rect x="6" y="12.500" width="10" height="7.500" fill="#3b6093"></rect><rect x="12" y="14" width="2.500" height="4.500" fill="#dfe5ee"></rect></svg>
<!--RIGHT-PANEL-END-->
<!-- ================= BOTTOM TABS ================= -->
<!--BOTTOM-TABS-->
<div class="a" style="left:0;top:994px;width:392px;height:22px;background:#e2e7f4"></div>
<div class="a" style="left:398px;top:994px;width:1159px;height:22px;background:#e2e7f4"></div>
<div class="a" style="left:1563px;top:994px;width:356px;height:22px;background:#e2e7f4"></div>
<svg class="a" style="left:5px;top:997px" width="14" height="12"><path d="M.5 2.500q0-2 2-2h3l1.500 1.500h5q1.500 0 1.500 1.500v6.500q0 1.500-1.500 1.500h-10q-1.500 0-1.500-1.500z" fill="#3c7a5c"></path><path d="M.5 4.500h13v5.500q0 1.500-1.500 1.500h-10q-1.500 0-1.500-1.500z" fill="#5e9e78"></path></svg>
<div class="t" style="left: 22.5px; top: 997.5px; font-size: 12px; color: rgb(51, 51, 51); letter-spacing: -0.45px; transform: scaleX(0.994); transform-origin: 0px 50%;">Project</div>
<div class="a" style="left:2.0px;top:1012px;width:58.6px;height:3px;background:#5e9e78"></div>
<svg class="a" style="left:69px;top:997px" width="14" height="12"><path d="M.5 2.500q0-2 2-2h3l1.500 1.500h5q1.500 0 1.500 1.500v6.500q0 1.500-1.500 1.500h-10q-1.500 0-1.500-1.500z" fill="#2f6a92"></path><path d="M.5 4.500h13v5.500q0 1.500-1.500 1.500h-10q-1.500 0-1.500-1.500z" fill="#4a8ab8"></path></svg>
<div class="t" style="left: 86px; top: 997.5px; font-size: 12px; color: rgb(51, 51, 51); letter-spacing: -0.45px; transform: scaleX(0.993); transform-origin: 0px 50%;">Process edit</div>
<div class="a" style="left:66.0px;top:1012px;width:84.7px;height:3px;background:#2b4f9c"></div>
<div class="a" style="left:154.8px;top:994px;width:171.5px;height:18px;background:#fff;border:1px solid #c4cbe0;border-top:none"></div>
<svg class="a" style="left:160px;top:995px" width="13" height="14"><rect width="13" height="14" fill="#586270"></rect><rect x="1" y="1" width="11" height="6.500" fill="#2a50f0"></rect><rect x="1" y="7.500" width="11" height="5.500" fill="#1d9a3e"></rect></svg>
<div class="t" style="left: 176px; top: 997.5px; font-size: 12px; color: rgb(17, 17, 17); font-weight: bold; letter-spacing: -0.45px; transform: scaleX(0.964); transform-origin: 0px 50%;">Surplus material parameters</div>
<div class="a" style="left:154.8px;top:1012px;width:171.5px;height:3px;background:#2b4f9c"></div>
<svg class="a" style="left:402.2px;top:996px" width="14" height="14"><circle cx="7" cy="7" r="6.800" fill="#0e6fc0"></circle><text x="7" y="11" font-family="Liberation Serif,serif" font-size="11" font-weight="bold" fill="#fff" text-anchor="middle">i</text></svg>
<div class="t" style="left: 420.2px; top: 997.5px; font-size: 12px; color: rgb(51, 51, 51); letter-spacing: -0.14px;">Project info.</div>
<div class="a" style="left:400.7px;top:1012px;width:85.1px;height:3px;background:#5e9e78"></div>
<svg class="a" style="left:494px;top:996px" width="14" height="14"><circle cx="7" cy="7" r="6" fill="#d42020"></circle><circle cx="5.500" cy="5" r="2" fill="#f06060" opacity=".7"></circle></svg>
<div class="t" style="left: 511.6px; top: 997.5px; font-size: 12px; color: rgb(51, 51, 51); letter-spacing: -0.41px;">Simul. process errors</div>
<div class="a" style="left:491.2px;top:1012px;width:123.5px;height:3px;background:#2b4f9c"></div>
<svg class="a" style="left:621px;top:995px" width="17" height="16"><rect x="4.500" y="1.500" width="11" height="9" fill="#fff" stroke="#333" stroke-width="1.400"></rect><rect x="6" y="3" width="8" height="4" fill="#c03030"></rect><rect x="2" y="10" width="13" height="4" fill="#2a7a2a"></rect><circle cx="4" cy="12.500" r="3" fill="#f0b400" stroke="#333" stroke-width=".8"></circle></svg>
<div class="t" style="left: 640.3px; top: 997.5px; font-size: 12px; color: rgb(51, 51, 51); letter-spacing: -0.38px;">Simul. process stat...</div>
<div class="a" style="left:620.4px;top:1012px;width:123.3px;height:3px;background:#2b4f9c"></div>
<svg class="a" style="left:751.5px;top:996px" width="14" height="14"><circle cx="7" cy="7" r="6.800" fill="#0e6fc0"></circle><text x="7" y="11" font-family="Liberation Serif,serif" font-size="11" font-weight="bold" fill="#fff" text-anchor="middle">i</text></svg>
<div class="t" style="left: 769.5px; top: 997.5px; font-size: 12px; color: rgb(51, 51, 51); letter-spacing: -0.29px;">Simul. process info</div>
<div class="a" style="left:749.0px;top:1012px;width:120.5px;height:3px;background:#2b4f9c"></div>
<svg class="a" style="left:877.6px;top:996px" width="14" height="14"><circle cx="7" cy="7" r="6.800" fill="#0e6fc0"></circle><text x="7" y="11" font-family="Liberation Serif,serif" font-size="11" font-weight="bold" fill="#fff" text-anchor="middle">i</text></svg>
<div class="t" style="left: 895.3px; top: 997.5px; font-size: 12px; color: rgb(51, 51, 51); letter-spacing: -0.12px;">Selection info</div>
<div class="a" style="left:875.1px;top:1012px;width:94.3px;height:3px;background:#2b4f9c"></div>
<svg class="a" style="left:977.600px;top:996px" width="14" height="14"><circle cx="7" cy="7" r="6.800" fill="#0e6fc0"></circle><text x="7" y="10.800" font-family="Liberation Sans,sans-serif" font-size="10" font-weight="bold" fill="#fff" text-anchor="middle">V</text></svg>
<div class="t" style="left: 995.3px; top: 997.5px; font-size: 12px; color: rgb(51, 51, 51); letter-spacing: -0.45px;">Variables</div>
<div class="a" style="left:975.1px;top:1012px;width:70.0px;height:3px;background:#2b4f9c"></div>
<div class="a" style="left:1050.5px;top:994px;width:126.4px;height:18px;background:#fff;border:1px solid #c4cbe0;border-top:none"></div>
<svg class="a" style="left:1055px;top:995px" width="13" height="14"><rect width="13" height="14" fill="#586270"></rect><rect x="1" y="1" width="11" height="6.500" fill="#2a50f0"></rect><rect x="1" y="7.500" width="11" height="5.500" fill="#1d9a3e"></rect></svg>
<div class="t" style="left: 1071px; top: 997.5px; font-size: 12px; color: rgb(17, 17, 17); font-weight: bold; letter-spacing: -0.45px; transform: scaleX(0.965); transform-origin: 0px 50%;">Surplus material re...</div>
<div class="a" style="left:1050.5px;top:1012px;width:126.4px;height:3px;background:#2b4f9c"></div>
<svg class="a" style="left:1184px;top:995px" width="13" height="15"><rect x=".5" y="1.500" width="12" height="13" fill="#fff" stroke="#bbb"></rect><path d="M0 1h13" stroke="#444" stroke-width="1.500"></path><path d="M6.500 4v8M4.500 6l2-2.500l2 2.500M4.500 10l2 2.500l2-2.500" stroke="#e01818" stroke-width="1.300" fill="none"></path></svg>
<div class="t" style="left: 1200.5px; top: 997.5px; font-size: 12px; color: rgb(51, 51, 51); letter-spacing: -0.45px;">Measurements</div>
<div class="a" style="left:1180.0px;top:1012px;width:98.4px;height:3px;background:#2b4f9c"></div>
<svg class="a" style="left:1288px;top:995px" width="16" height="16"><rect x=".5" y="1.500" width="12" height="9" fill="#fff" stroke="#9ab"></rect><rect x=".5" y="1" width="12" height="2.500" fill="#9ec0ee"></rect><circle cx="10.500" cy="11.500" r="3.400" fill="#0e6fc0"></circle><circle cx="10.500" cy="11.500" r="1.300" fill="#fff"></circle></svg>
<div class="t" style="left: 1304.3px; top: 997.5px; font-size: 12px; color: rgb(51, 51, 51); letter-spacing: -0.22px;">Debug simul. status</div>
<div class="a" style="left:1284.0px;top:1012px;width:123.7px;height:3px;background:#2b4f9c"></div>
<svg class="a" style="left:1417px;top:995px" width="16" height="16"><rect x=".5" y="1.500" width="12" height="9" fill="#fff" stroke="#9ab"></rect><rect x=".5" y="1" width="12" height="2.500" fill="#9ec0ee"></rect><circle cx="10.500" cy="11.500" r="3.400" fill="#0e6fc0"></circle><circle cx="10.500" cy="11.500" r="1.300" fill="#fff"></circle></svg>
<div class="t" style="left: 1433.5px; top: 997.5px; font-size: 12px; color: rgb(51, 51, 51); letter-spacing: -0.32px;">Debug simul. Cons...</div>
<div class="a" style="left:1413.0px;top:1012px;width:124.0px;height:3px;background:#2b4f9c"></div>
<div class="a" style="left:1563.2px;top:994px;width:72.5px;height:18px;background:#fff;border:1px solid #c4cbe0;border-top:none"></div>
<svg class="a" style="left:1569px;top:996px" width="14" height="14"><rect x=".5" y=".5" width="11" height="9" fill="#f0a030" stroke="#c07818"></rect><path d="M2 3h8M2 5h8M2 7h5" stroke="#fff" stroke-width=".9"></path><circle cx="10" cy="10" r="3.500" fill="#0e6fc0"></circle><path d="M10 8v2h1.500" stroke="#fff" stroke-width=".8" fill="none"></path></svg>
<div class="t" style="left: 1585.7px; top: 997.5px; font-size: 12px; color: rgb(17, 17, 17); font-weight: bold; letter-spacing: -0.45px; transform: scaleX(0.948); transform-origin: 0px 50%;">Program</div>
<div class="a" style="left:1563.2px;top:1012px;width:72.5px;height:3px;background:#2b4f9c"></div>
<!--BOTTOM-TABS-END-->


</body></html>
